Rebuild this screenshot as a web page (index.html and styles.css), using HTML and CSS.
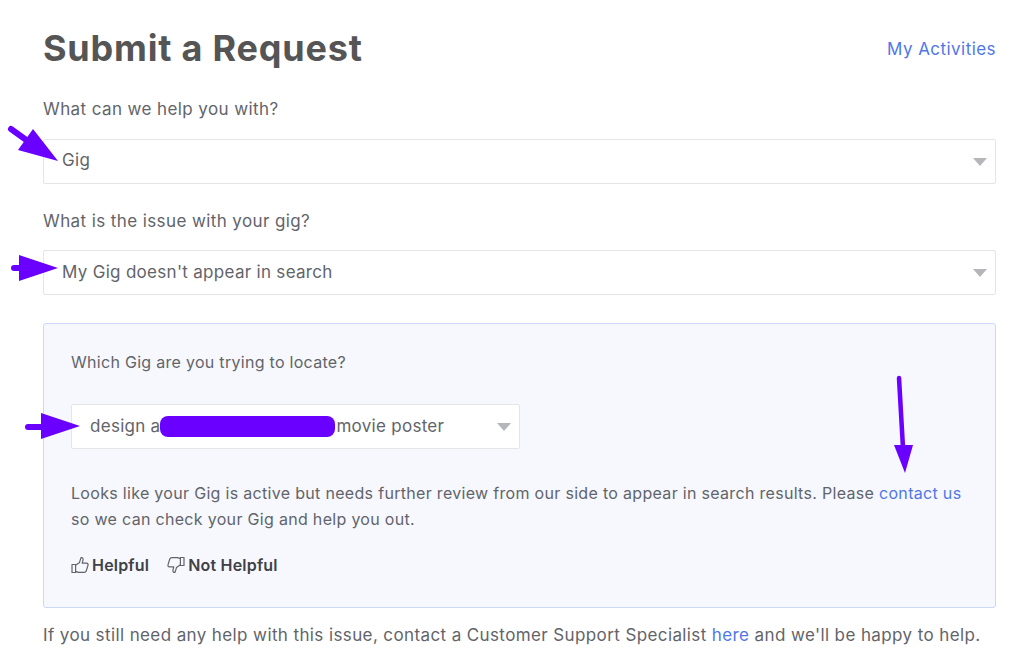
FILE: index.html
```html
<!DOCTYPE html>
<html lang="en">
<head>
<meta charset="utf-8">
<title>Submit a Request</title>
<link rel="stylesheet" href="styles.css">
</head>
<body>
<main class="page">
  <header class="head">
    <h1>Submit a Request</h1>
    <a class="link activities" href="#">My Activities</a>
  </header>

  <div class="label first">What can we help you with?</div>
  <div class="select"><span class="value">Gig</span><i class="caret"></i></div>

  <div class="label second">What is the issue with your gig?</div>
  <div class="select"><span class="value lower">My Gig doesn't appear in search</span><i class="caret"></i></div>

  <section class="panel">
    <div class="panel-label">Which Gig are you trying to locate?</div>
    <div class="select small"><span class="value gig">design a<b class="blob"></b>movie poster</span><i class="caret"></i></div>
    <p class="message">Looks like your Gig is active but needs further review from our side to appear in search results. Please <a class="link" href="#">contact us</a> so we can check your Gig and help you out.</p>
    <div class="votes">
      <span class="vote">
        <svg class="thumb" viewBox="0 0 18 18" width="18" height="18"><path d="M1 8.5h3.6v8H1zM4.6 9.2 8.5 6.4 10 1.6c1.5-.4 2.400 1 2 2.500l-.8 3h4.200c1.500 0 2 1.300 1.500 2.500l-1.700 5.400c-.3.9-1 1.400-2 1.400H7.500l-2.900-1"/></svg>
        Helpful
      </span>
      <span class="vote">
        <svg class="thumb" viewBox="0 0 18 18" width="18" height="18"><path d="M17 1.500h-3.600v8H17zM13.400 8.800 9.500 11.600 8 16.400c-1.500.4-2.400-1-2-2.500l.8-3H2.600c-1.500 0-2-1.300-1.500-2.500l1.700-5.400c.3-.9 1-1.400 2-1.400h5.700l2.900 1"/></svg>
        Not Helpful
      </span>
    </div>
  </section>

  <p class="foot">If you still need any help with this issue, contact a Customer Support Specialist <a class="link" href="#">here</a> and we'll be happy to help.</p>
</main>

<svg class="arrows" width="1024" height="662" viewBox="0 0 1024 662" aria-hidden="true">
  <path class="shaft" d="M11 129 36 147"/>
  <polygon class="head-fill" points="33,129 58,161 18,150"/>
  <path class="shaft wide" d="M14 268H24"/>
  <polygon class="head-fill" points="19,255 58,268 19,281"/>
  <path class="shaft wide" d="M28 427H45"/>
  <polygon class="head-fill" points="41,413 80,426 41,439"/>
  <path class="shaft thin" d="M899 378 903 448"/>
  <polygon class="head-fill" points="894,445 913,445 905,473"/>
</svg>
</body>
</html>
```

FILE: styles.css
```css
* { box-sizing: border-box; }
html, body { margin: 0; height: 662px; overflow: hidden; background: #fff; }
body { position: relative; font-family: "Inter", "Liberation Sans", sans-serif; color: #62646a; }
.page { padding: 0 28px 0 43px; }
.head { display: flex; justify-content: space-between; align-items: center; height: 97px; padding-bottom: 1px; }
h1 { margin: 0; font-size: 36px; line-height: 44px; font-weight: 700; color: #555; letter-spacing: .8px; }
.link { color: #4f77e8; text-decoration: none; }
.activities { font-size: 17px; letter-spacing: .45px; margin-top: 1px; }
.label { font-size: 17px; line-height: 24px; letter-spacing: .4px; }
.label.first { margin-bottom: 18px; }
.label.second { margin-top: 25px; margin-bottom: 17px; }
.select { display: flex; align-items: center; justify-content: space-between; height: 45px; padding: 0 8px 0 18px; background: #fff; border: 1px solid #e4e5e7; border-radius: 2px; font-size: 17px; }
.value { letter-spacing: .3px; padding-bottom: 4px; }
.value.lower { padding-bottom: 1px; }
.caret { width: 0; height: 0; border-left: 7px solid transparent; border-right: 7px solid transparent; border-top: 8px solid #b5b6ba; margin-top: 1px; }
.panel { margin-top: 28px; height: 285px; padding: 26px 27px 0; background: #f6f8fe; border: 1px solid #cbd8f6; border-radius: 3px; }
.panel-label { font-size: 16px; line-height: 24px; letter-spacing: .29px; }
.select.small { width: 449px; margin-top: 30px; font-size: 17px; }
.gig { display: flex; align-items: center; letter-spacing: .28px; padding-bottom: 1px; }
.blob { display: block; width: 175px; height: 21px; margin: 0 1px 0 0; background: #6a00ff; border-radius: 8px; }
.message { margin: 31px 0 0; font-size: 16px; line-height: 26px; letter-spacing: .31px; }
.votes { display: flex; gap: 18px; margin-top: 21px; font-size: 16px; line-height: 24px; font-weight: 600; color: #404145; }
.vote { display: flex; align-items: center; gap: 3px; letter-spacing: .2px; }
.thumb { fill: none; stroke: #62646a; stroke-width: 1.200; stroke-linejoin: round; }
.foot { margin: 15px 0 0; font-size: 17px; line-height: 24px; letter-spacing: .39px; }
.arrows { position: absolute; left: 0; top: 0; pointer-events: none; }
.shaft { fill: none; stroke: #6a00ff; stroke-width: 6; stroke-linecap: round; }
.shaft.thin { stroke-width: 4.500; }
.head-fill { fill: #6a00ff; }
```
